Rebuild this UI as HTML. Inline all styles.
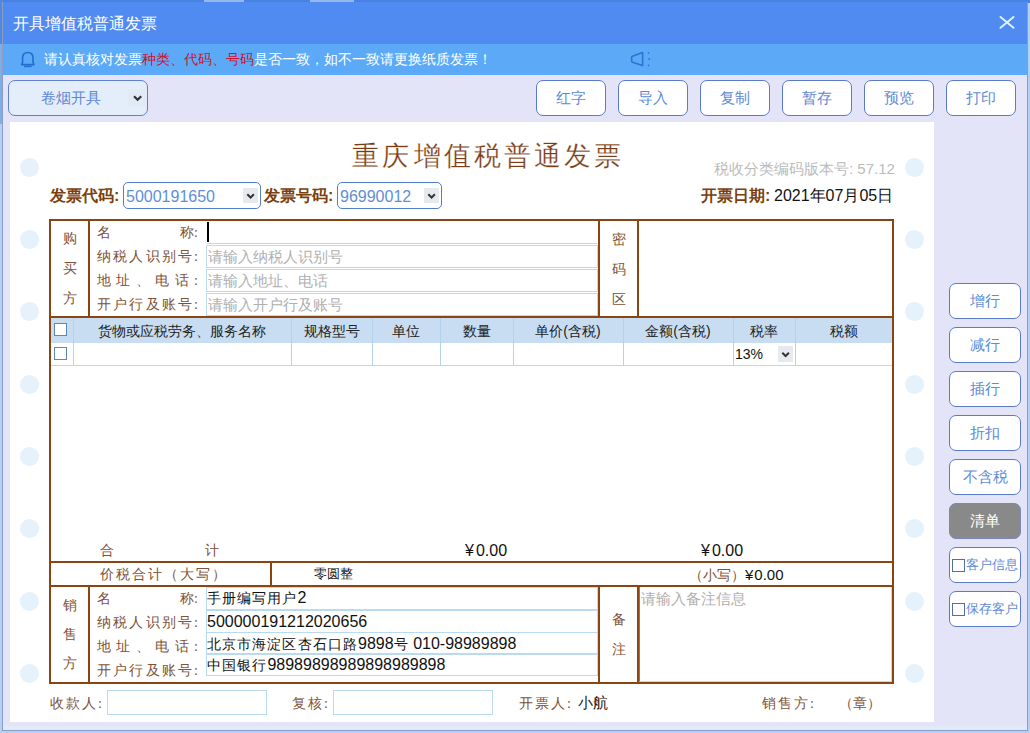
<!DOCTYPE html>
<html><head><meta charset="utf-8">
<style>
*{margin:0;padding:0;box-sizing:border-box}
html,body{width:1030px;height:733px;overflow:hidden;background:#b6d0f2;font-family:"Liberation Sans",sans-serif}
.a{position:absolute}
#top{left:0;top:0;width:1030px;height:3px;background:#4a82e2}
#win{left:2px;top:2px;width:1026px;height:729px;background:#e3e4f8;border:1px solid #8a9cc8;border-top:none}
#win2{left:3px;top:726px;width:1024px;height:4px;background:#e2e9f8}
#title{left:3px;top:2px;width:1024px;height:42px;background:#4f8bf0;color:#fff;font-size:16px;line-height:44px;padding-left:10px}
#notice{left:3px;top:44px;width:1024px;height:31px;background:#5caaf7;color:#fff;font-size:14px;line-height:31px;padding-left:41px}
#notice .r{color:#d0102e}
.btn{height:36px;width:70px;border:1px solid #5a7acb;border-radius:7px;background:#fff;color:#5e8ad6;font-size:15px;text-align:center;line-height:34px}
#paper{left:10px;top:122px;width:924px;height:600px;background:#fff}
.hole{width:19px;height:19px;border-radius:50%;background:#e5f2fb}
.br{background:#8b4513}
.lb{color:#7e5236;font-family:"Liberation Serif",serif;font-size:14px}
.inp{border:1px solid #b9daf0;background:#fff}

.ttl{font-family:"Liberation Serif",serif;font-size:27px;line-height:36px;color:#7a3c12;-webkit-text-stroke:0.25px #fff;letter-spacing:3px}
.bl{font-size:16px;font-weight:bold;color:#7b3f10;line-height:20px}
.sel{height:27px;border:1px solid #5080cc;border-radius:5px;background:#fff;color:#5d8fd8;font-size:16px;line-height:27px;padding-left:2px}
.arr{position:absolute;top:4px;width:15px;height:15px;background:#e6e9ee}
.vt{font-family:"Liberation Serif",serif;font-size:14px;color:#7e5236;text-align:center;line-height:30px}
.lab{width:101px;display:flex;justify-content:space-between;font-family:"Liberation Serif",serif;font-size:14px;color:#7e5236;line-height:18px}
.ph{left:206px;width:392px;height:23px;color:#b0b0b0;font-size:15px;line-height:21px;padding-left:1px}
.tx{left:206px;width:392px;height:22px;color:#111;font-size:16px;line-height:20px;padding-left:0}
.vl{top:318px;width:1px;height:47px;background:#b3d2ec}
.c15{font-size:14px;letter-spacing:1.1px}
.cb{width:13px;height:13px;border:1px solid #5c8ab6;background:#fff}
.hd{top:321px;text-align:center;font-size:14px;line-height:20px;color:#222}
</style></head><body>
<div id="top" class="a"></div><div class="a" style="left:0;top:0;width:3px;height:44px;background:#5088e0"></div><div class="a" style="left:0;top:44px;width:2px;height:80px;background:#7eaee4"></div><div class="a" style="left:204px;top:0;width:40px;height:2px;background:#a8c4f0;opacity:.8"></div><div class="a" style="left:310px;top:0;width:44px;height:2px;background:#a8c4f0;opacity:.8"></div><div id="win" class="a"></div><div id="win2" class="a"></div>
<div id="title" class="a">开具增值税普通发票</div>
<div id="notice" class="a">请认真核对发票<span class="r">种类、代码、号码</span>是否一致，如不一致请更换纸质发票！</div>


<svg class="a" style="left:16px;top:48px" width="24" height="22" viewBox="0 0 24 22"><path d="M5.6 16.6 L6.6 14.2 V10 Q6.6 4.5 11.8 4.5 Q17 4.5 17 10 V14.2 L18 16.6 Z" fill="none" stroke="#1f6fd0" stroke-width="1.6" stroke-linejoin="round"/><path d="M8 18.4 H15.6" stroke="#1f6fd0" stroke-width="1.5"/></svg>
<svg class="a" style="left:624px;top:48px" width="32" height="22" viewBox="0 0 32 22"><path d="M8.5 8.2 L18.6 4.6 V17.6 L8.5 14.2 Q7.6 13.9 7.6 13 V9.4 Q7.6 8.5 8.5 8.2 Z" fill="none" stroke="#2a74d4" stroke-width="1.6" stroke-linejoin="round"/><circle cx="24.6" cy="4.8" r="0.9" fill="#2a74d4"/><circle cx="25.2" cy="11" r="0.9" fill="#2a74d4"/><circle cx="24.6" cy="17.4" r="0.9" fill="#2a74d4"/></svg>
<svg class="a" style="left:996px;top:12px" width="22" height="20" viewBox="0 0 22 20"><path d="M4.5 5 L17.5 15.8 M17.5 5 L4.5 15.8" stroke="#def2ff" stroke-width="2" stroke-linecap="round"/></svg>
<div class="a" style="left:8px;top:80px;width:140px;height:36px;border:1px solid #5f80d0;border-radius:7px;background:#e4eefa;color:#5e8ad6;font-size:15px;line-height:34px;padding-left:32px">卷烟开具<i class="arr" style="left:119px;top:8px;width:19px;height:18px;background:#e2eaf6"><svg width="19" height="18" viewBox="0 0 19 18" style="display:block"><path d="M6 7.3 L9.6 10.8 L13.2 7.3" fill="none" stroke="#333" stroke-width="2.2"/></svg></i></div>

<div class="a btn" style="left:536px;top:80px">红字</div>
<div class="a btn" style="left:618px;top:80px">导入</div>
<div class="a btn" style="left:700px;top:80px">复制</div>
<div class="a btn" style="left:782px;top:80px">暂存</div>
<div class="a btn" style="left:864px;top:80px">预览</div>
<div class="a btn" style="left:946px;top:80px">打印</div>

<div id="paper" class="a"></div>

<div class="a btn" style="left:949px;top:283px;width:72px">增行</div>
<div class="a btn" style="left:949px;top:327px;width:72px">减行</div>
<div class="a btn" style="left:949px;top:371px;width:72px">插行</div>
<div class="a btn" style="left:949px;top:415px;width:72px">折扣</div>
<div class="a btn" style="left:949px;top:459px;width:72px">不含税</div>
<div class="a btn" style="left:949px;top:503px;width:72px;background:#898989;border-color:#7c86b8;color:#fff">清单</div>
<div class="a btn" style="left:949px;top:547px;width:72px;font-size:13px;text-align:left;padding-left:16px">客户信息<i class="a" style="left:2px;top:11px;width:13px;height:13px;border:1px solid #52709e;background:#fff"></i></div>
<div class="a btn" style="left:949px;top:591px;width:72px;font-size:13px;text-align:left;padding-left:16px">保存客户<i class="a" style="left:2px;top:11px;width:13px;height:13px;border:1px solid #52709e;background:#fff"></i></div>


<!-- holes -->
<div class="a hole" style="left:20px;top:158px"></div>
<div class="a hole" style="left:20px;top:230px"></div>
<div class="a hole" style="left:20px;top:302px"></div>
<div class="a hole" style="left:20px;top:375px"></div>
<div class="a hole" style="left:20px;top:447px"></div>
<div class="a hole" style="left:20px;top:519px"></div>
<div class="a hole" style="left:20px;top:592px"></div>
<div class="a hole" style="left:20px;top:664px"></div>
<div class="a hole" style="left:905px;top:158px"></div>
<div class="a hole" style="left:905px;top:230px"></div>
<div class="a hole" style="left:905px;top:302px"></div>
<div class="a hole" style="left:905px;top:375px"></div>
<div class="a hole" style="left:905px;top:447px"></div>
<div class="a hole" style="left:905px;top:519px"></div>
<div class="a hole" style="left:905px;top:592px"></div>
<div class="a hole" style="left:905px;top:664px"></div>

<div class="a ttl" style="left:352px;top:138px">重庆</div>
<div class="a ttl" style="left:414px;top:138px">增值税普通发票</div>
<div class="a" style="left:714px;top:159px;font-size:15px;color:#bbb;line-height:20px">税收分类编码版本号: 57.12</div>

<div class="a bl" style="left:50px;top:186px">发票代码:</div>
<div class="a sel" style="left:123px;top:182px;width:138px">5000191650<i class="arr" style="left:119px;top:5px"><svg width="15" height="15" viewBox="0 0 15 15" style="display:block"><path d="M4.3 6.3 L7.6 9.5 L10.9 6.3" fill="none" stroke="#333" stroke-width="2"/></svg></i></div>
<div class="a bl" style="left:264px;top:186px">发票号码:</div>
<div class="a sel" style="left:337px;top:182px;width:105px">96990012<i class="arr" style="left:86px;top:5px"><svg width="15" height="15" viewBox="0 0 15 15" style="display:block"><path d="M4.3 6.3 L7.6 9.5 L10.9 6.3" fill="none" stroke="#333" stroke-width="2"/></svg></i></div>
<div class="a bl" style="left:701px;top:186px">开票日期:</div>
<div class="a" style="left:774px;top:186px;font-size:16px;color:#111;line-height:20px">2021年07月05日</div>

<!-- table outer -->
<div class="a" style="left:49px;top:219px;width:845px;height:465px;border:2px solid #8b4513"></div>
<div class="a br" style="left:51px;top:316px;width:841px;height:2px"></div>
<div class="a br" style="left:51px;top:561px;width:841px;height:2px"></div>
<div class="a br" style="left:51px;top:585px;width:841px;height:2px"></div>
<div class="a br" style="left:88px;top:221px;width:2px;height:95px"></div>
<div class="a br" style="left:598px;top:221px;width:2px;height:95px"></div>
<div class="a br" style="left:637px;top:221px;width:2px;height:95px"></div>
<div class="a br" style="left:270px;top:563px;width:2px;height:22px"></div>
<div class="a br" style="left:88px;top:587px;width:2px;height:95px"></div>
<div class="a br" style="left:598px;top:587px;width:2px;height:95px"></div>
<div class="a br" style="left:637px;top:587px;width:2px;height:95px"></div>

<div class="a vt" style="left:51px;top:224px;width:37px">购<br>买<br>方</div>
<div class="a vt" style="left:600px;top:225px;width:37px">密<br>码<br>区</div>
<div class="a vt" style="left:51px;top:591px;width:37px;line-height:29px">销<br>售<br>方</div>
<div class="a vt" style="left:600px;top:605px;width:37px;line-height:30px">备<br>注</div>

<div class="a lab" style="left:97px;top:224px"><span>名</span><span>称:</span></div>
<div class="a lab" style="left:97px;top:248px"><span>纳</span><span>税</span><span>人</span><span>识</span><span>别</span><span>号</span><span>:</span></div>
<div class="a lab" style="left:97px;top:272px"><span>地</span><span>址</span><span>、</span><span>电</span><span>话</span><span>:</span></div>
<div class="a lab" style="left:97px;top:296px"><span>开</span><span>户</span><span>行</span><span>及</span><span>账</span><span>号</span><span>:</span></div>

<div class="a inp" style="left:206px;top:221px;width:392px;height:23px;border-color:#fff #fff #b9daf0 #fff"></div>
<div class="a" style="left:207px;top:222px;width:1.5px;height:20px;background:#000"></div>
<div class="a inp ph" style="top:245px">请输入纳税人识别号</div>
<div class="a inp ph" style="top:269px">请输入地址、电话</div>
<div class="a inp ph" style="top:293px">请输入开户行及账号</div>

<!-- items -->
<div class="a" style="left:51px;top:318px;width:841px;height:25px;background:#c8ddf2"></div>
<div class="a" style="left:51px;top:365px;width:841px;height:1px;background:#bcd8ee"></div>
<div class="a vl" style="left:73px"></div>
<div class="a vl" style="left:291px"></div>
<div class="a vl" style="left:372px"></div>
<div class="a vl" style="left:440px"></div>
<div class="a vl" style="left:513px"></div>
<div class="a vl" style="left:623px"></div>
<div class="a vl" style="left:733px"></div>
<div class="a vl" style="left:795px"></div>
<div class="a cb" style="left:54px;top:323px"></div>
<div class="a cb" style="left:54px;top:347px"></div>
<div class="a hd" style="left:73px;width:218px">货物或应税劳务、服务名称</div>
<div class="a hd" style="left:291px;width:81px">规格型号</div>
<div class="a hd" style="left:372px;width:68px">单位</div>
<div class="a hd" style="left:440px;width:73px">数量</div>
<div class="a hd" style="left:513px;width:110px">单价(含税)</div>
<div class="a hd" style="left:623px;width:110px">金额(含税)</div>
<div class="a hd" style="left:733px;width:62px">税率</div>
<div class="a hd" style="left:795px;width:97px">税额</div>
<div class="a" style="left:735px;top:345px;font-size:14px;line-height:18px;color:#111">13%</div>
<div class="a arr" style="left:778px;top:346px;height:16px"><svg width="15" height="16" viewBox="0 0 15 15" style="display:block"><path d="M4.3 6.3 L7.6 9.5 L10.9 6.3" fill="none" stroke="#333" stroke-width="2"/></svg></div>

<div class="a lb" style="left:100px;top:542px">合</div>
<div class="a lb" style="left:205px;top:542px">计</div>
<div class="a" style="left:465px;top:541px;font-size:16px;line-height:20px;color:#111"><span style="margin-right:2px">¥</span>0.00</div>
<div class="a" style="left:701px;top:541px;font-size:16px;line-height:20px;color:#111"><span style="margin-right:2px">¥</span>0.00</div>
<div class="a lb" style="left:100px;top:566px;letter-spacing:2px">价税合计（大写）</div>
<div class="a" style="left:314px;top:565px;font-size:13px;line-height:18px;color:#111">零圆整</div>
<div class="a" style="left:689px;top:566px;font-size:14px;line-height:18px;color:#111"><span class="lb">（小写）</span><span style="margin-left:0px;margin-right:1px;font-size:15px">¥</span><span style="font-size:15px">0.00</span></div>

<div class="a lab" style="left:97px;top:590px"><span>名</span><span>称:</span></div>
<div class="a lab" style="left:97px;top:614px"><span>纳</span><span>税</span><span>人</span><span>识</span><span>别</span><span>号</span><span>:</span></div>
<div class="a lab" style="left:97px;top:638px"><span>地</span><span>址</span><span>、</span><span>电</span><span>话</span><span>:</span></div>
<div class="a lab" style="left:97px;top:662px"><span>开</span><span>户</span><span>行</span><span>及</span><span>账</span><span>号</span><span>:</span></div>
<div class="a inp tx" style="top:587px;height:23px"><span class="c15">手册编写用户</span>2</div>
<div class="a inp tx" style="top:610px;height:23px;line-height:22px">500000191212020656</div>
<div class="a inp tx" style="top:632px;line-height:22px"><span class="c15">北京市海淀区杏石口路</span>9898<span class="c15">号</span> 010-98989898</div>
<div class="a inp tx" style="top:654px"><span class="c15">中国银行</span>98989898989898989898</div>
<div class="a" style="left:639px;top:587px;width:253px;height:95px;border:1px solid #b9daf0;border-left:1px solid #8a7a6a;border-top:none;color:#b0b0b0;font-size:15px;line-height:20px;padding-left:1px;padding-top:2px">请输入备注信息</div>

<div class="a lb" style="left:50px;top:695px;letter-spacing:2px">收款人:</div>
<div class="a" style="left:107px;top:690px;width:160px;height:25px;border:1px solid #b9daf0"></div>
<div class="a lb" style="left:292px;top:695px;letter-spacing:2px">复核:</div>
<div class="a" style="left:333px;top:690px;width:160px;height:25px;border:1px solid #b9daf0"></div>
<div class="a lb" style="left:519px;top:695px;letter-spacing:2px">开票人:</div>
<div class="a" style="left:578px;top:693px;font-size:15px;line-height:20px;color:#111">小航</div>
<div class="a lb" style="left:762px;top:695px;letter-spacing:2px">销售方:</div>
<div class="a lb" style="left:839px;top:695px">（章）</div>
</body></html>
